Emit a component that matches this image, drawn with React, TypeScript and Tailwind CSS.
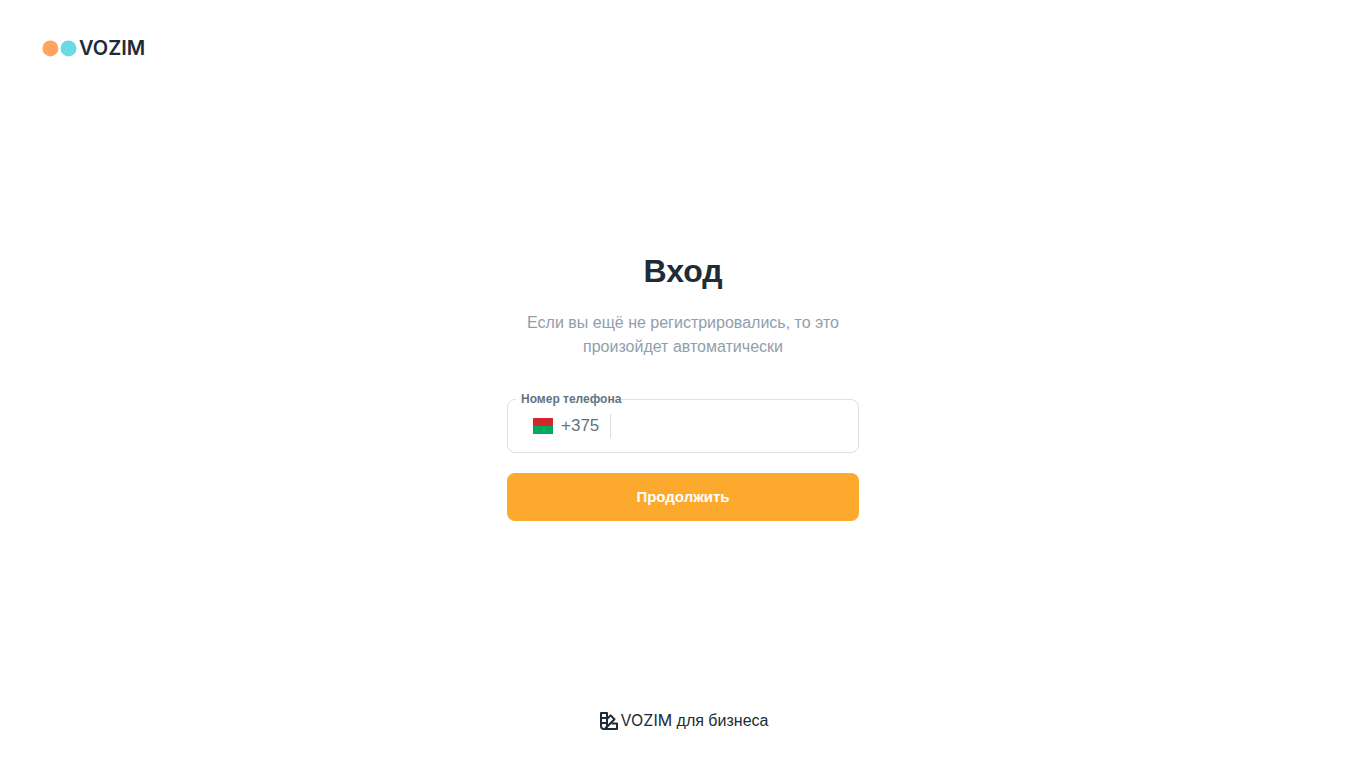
import React from 'react';

function Logo() {
  return (
    <a href="/" aria-label="VOZIM" className="flex items-center gap-0.5 text-[#212b36]">
      <svg width="35" height="18" viewBox="0 0 35 18" aria-hidden="true">
        <circle cx="8.4" cy="9.4" r="8" fill="#ffa55f" />
        <circle cx="26.5" cy="9.4" r="8" fill="#6bdae3" />
      </svg>
      <span className="font-[Inter,sans-serif] text-xl leading-5 font-semibold">VOZIM</span>
    </a>
  );
}

function SwatchIcon() {
  return (
    <svg
      width="18"
      height="20"
      viewBox="0 -2 18 20"
      fill="none"
      stroke="currentColor"
      strokeWidth="2"
      strokeLinejoin="round"
      aria-hidden="true"
    >
      <path d="M1 1h6v12.9A3 3 0 0 1 4 17 3 3 0 0 1 1 14z" />
      <path d="M1 6h6M1 11h6" />
      <path d="M7 7 10.6 3.4l3.9 3.9L5 16.8" />
      <path d="M11.5 11.5H17V17H4" />
    </svg>
  );
}

function Flag() {
  return (
    <svg className="shrink-0" width="20" height="16" viewBox="0 0 20 16" role="img" aria-label="Беларусь">
      <rect width="20" height="8" fill="#d22730" />
      <rect y="8" width="20" height="8" fill="#00a95c" />
    </svg>
  );
}

export default function App() {
  return (
    <div className="flex min-h-screen flex-col bg-white font-['Liberation_Sans',sans-serif] text-[#212b36]">
      <header className="flex h-24 items-center px-[42px]">
        <Logo />
      </header>

      <main className="flex grow flex-col items-center justify-center px-4">
        <form className="flex w-full max-w-[352px] flex-col" onSubmit={(e) => e.preventDefault()}>
          <h1 className="text-center text-[32px] leading-12 font-bold">Вход</h1>
          <p className="mt-4 text-center text-base text-[#919eab]">
            Если вы ещё не регистрировались, то это произойдет автоматически
          </p>

          <fieldset className="mt-[34px] min-w-0 rounded-lg border border-[#dce0e4]">
            <legend className="ml-2 pl-[5px] text-xs leading-3 font-bold text-[#637381]">
              <label htmlFor="phone">Номер телефона</label>
            </legend>
            <div className="flex h-[47px] items-center px-[25px] pb-1.5">
              <Flag />
              <span className="ml-2 shrink-0 text-[17px] leading-6 text-[#637381]">+375</span>
              <span className="ml-[11px] h-6 w-px shrink-0 bg-[#dce0e4]" />
              <input
                id="phone"
                type="tel"
                className="ml-2 h-6 min-w-0 grow bg-transparent text-base outline-none"
              />
            </div>
          </fieldset>

          <button
            type="submit"
            className="mt-5 h-12 rounded-lg bg-[#fda92d] text-[15px] font-bold text-white"
          >
            Продолжить
          </button>
        </form>
      </main>

      <footer className="flex h-24 items-center justify-center pl-0.5">
        <a href="/business" className="flex items-center gap-[3px] text-base">
          <SwatchIcon />
          <span>
            <span className="font-[Inter,sans-serif]">VOZIM</span> для бизнеса
          </span>
        </a>
      </footer>
    </div>
  );
}
